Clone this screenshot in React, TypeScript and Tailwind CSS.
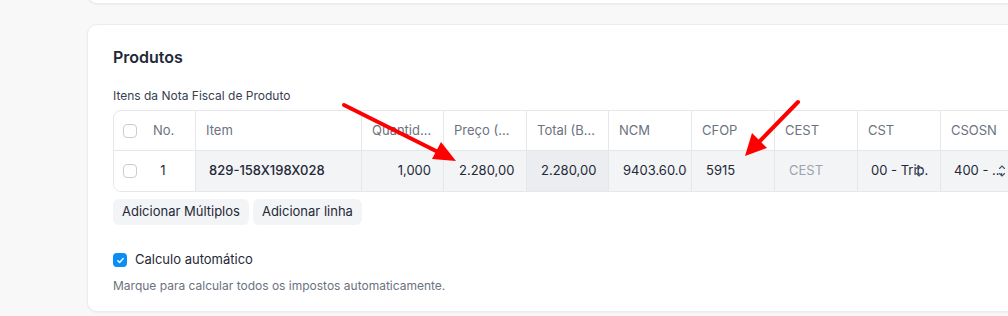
import React from "react";

const cols = "grid grid-cols-[82px_166px_82px_83px_82px_83px_83px_83px_83px_83px_83px]";

const headers = ["Item", "Quantidade", "Preço (BRL)", "Total (BRL)", "NCM", "CFOP", "CEST", "CST", "CSOSN", "Origem"];

function Box({ checked = false }: { checked?: boolean }) {
  if (checked) {
    return (
      <span className="w-[14px] h-[14px] rounded-[4px] bg-[#0a8df5] flex items-center justify-center shrink-0">
        <svg width="9" height="9" viewBox="0 0 10 10" fill="none">
          <path d="M2 5.2l2 2 4-4.4" stroke="white" strokeWidth="1.6" strokeLinecap="round" strokeLinejoin="round" />
        </svg>
      </span>
    );
  }
  return <span className="w-[14px] h-[14px] rounded-[4px] border border-[#c9ccd1] bg-white shrink-0" />;
}

function Carets() {
  return (
    <svg className="absolute left-[57px] top-[13px]" width="8" height="14" viewBox="0 0 8 14" fill="none">
      <path d="M1.5 4.5L4 2l2.5 2.5" stroke="#4b5563" strokeWidth="1.1" strokeLinecap="round" strokeLinejoin="round" />
      <path d="M1.5 9.5L4 12l2.5-2.5" stroke="#4b5563" strokeWidth="1.1" strokeLinecap="round" strokeLinejoin="round" />
    </svg>
  );
}

export default function App() {
  return (
    <div className="relative w-[1008px] h-[316px] overflow-hidden bg-[#f8f8f8] font-['Inter',sans-serif] text-[13px] text-[#1f2937]">
      {/* previous card */}
      <div className="ml-[87px] mt-[-20px] w-[960px] h-[24px] bg-white rounded-[10px] border border-[#ececec] shadow-[0_1px_2px_rgba(0,0,0,0.05)]" />

      {/* Produtos card */}
      <div className="ml-[87px] mt-[20px] w-[1000px] bg-white rounded-[10px] border border-[#ececec] shadow-[0_1px_2px_rgba(0,0,0,0.05)] pl-[25px] pt-[22px] pb-[17px]">
        <h2 className="text-[16px] leading-[20px] font-semibold text-[#1f2937]">Produtos</h2>
        <p className="mt-[21px] text-[12px] leading-[16px] text-[#374151]">Itens da Nota Fiscal de Produto</p>

        <div className="mt-[6px] w-[1000px] border border-[#e5e7eb] rounded-[8px] overflow-hidden">
          {/* header */}
          <div className={`${cols} h-[40px] border-b border-[#e5e7eb] text-[#6b7280]`}>
            <div className="flex items-center pl-[9px] border-r border-[#e5e7eb]">
              <Box />
              <span className="ml-[16px]">No.</span>
            </div>
            {headers.map((h) => (
              <div key={h} className="flex items-center px-[10px] border-r border-[#e5e7eb] min-w-0">
                <span className="truncate">{h}</span>
              </div>
            ))}
          </div>
          {/* row */}
          <div className={`${cols} h-[40px]`}>
            <div className="flex items-center pl-[9px] border-r border-[#e5e7eb] bg-white">
              <Box />
              <span className="ml-[15px] w-[22px] text-center">1</span>
            </div>
            <div className="flex items-center pl-[13px] border-r border-[#e5e7eb] bg-[#f3f4f6] font-medium">829-158X198X028</div>
            <div className="flex items-center justify-end pr-[12px] border-r border-[#e5e7eb] bg-[#f3f4f6]">1,000</div>
            <div className="flex items-center pl-[15px] border-r border-[#e5e7eb] bg-[#f3f4f6]">2.280,00</div>
            <div className="flex items-center pl-[14px] border-r border-[#e5e7eb] bg-[#ebedf0]">2.280,00</div>
            <div className="flex items-center pl-[14px] border-r border-[#e5e7eb] bg-[#f3f4f6]">
              <span className="w-[64px] overflow-hidden whitespace-nowrap">9403.60.00</span>
            </div>
            <div className="flex items-center pl-[14px] border-r border-[#e5e7eb] bg-[#f3f4f6]">5915</div>
            <div className="flex items-center pl-[14px] border-r border-[#e5e7eb] bg-[#f3f4f6] text-[#9ca3af]">CEST</div>
            <div className="relative flex items-center pl-[13px] border-r border-[#e5e7eb] bg-[#f3f4f6] whitespace-nowrap overflow-hidden">
              <span>00 - Trib.</span>
              <Carets />
            </div>
            <div className="relative flex items-center pl-[13px] border-r border-[#e5e7eb] bg-[#f3f4f6] whitespace-nowrap overflow-hidden">
              <span>400 - ...</span>
              <Carets />
            </div>
            <div className="bg-[#f3f4f6]" />
          </div>
        </div>

        <div className="mt-[7px] flex gap-[4px]">
          <button className="h-[26px] px-[9px] rounded-[6px] bg-[#f3f4f6] text-[13px] text-[#1f2937]">Adicionar Múltiplos</button>
          <button className="h-[26px] px-[9px] rounded-[6px] bg-[#f3f4f6] text-[13px] text-[#1f2937]">Adicionar linha</button>
        </div>

        <label className="mt-[25px] flex items-center gap-[8px] h-[20px]">
          <Box checked />
          <span className="text-[13px] text-[#1f2937]">Calculo automático</span>
        </label>
        <p className="mt-[8px] text-[12px] leading-[16px] text-[#6b7280]">Marque para calcular todos os impostos automaticamente.</p>
      </div>

      {/* annotation arrows */}
      <svg className="absolute inset-0 pointer-events-none" width="1008" height="316" viewBox="0 0 1008 316">
        <line x1="344" y1="105" x2="440" y2="153" stroke="#ff0000" strokeWidth="4" strokeLinecap="round" />
        <polygon points="456,161 432,159 441,142" fill="#ff0000" />
        <line x1="798" y1="102" x2="758" y2="143" stroke="#ff0000" strokeWidth="4" strokeLinecap="round" />
        <polygon points="745,156 752,133 767,148" fill="#ff0000" />
      </svg>
    </div>
  );
}
